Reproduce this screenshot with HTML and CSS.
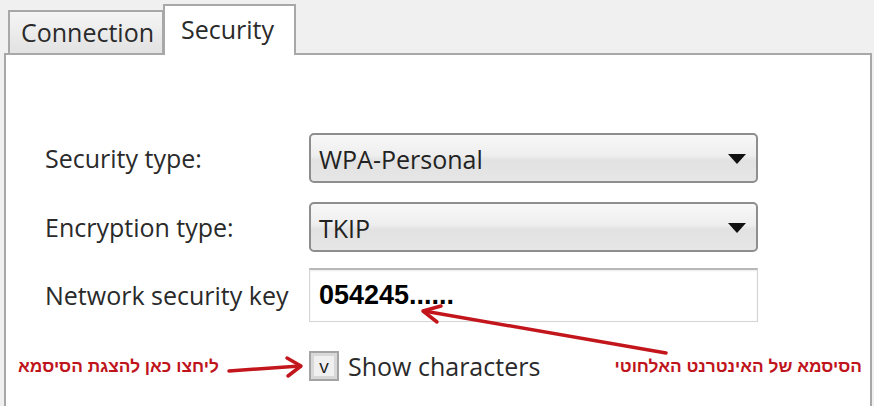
FILE: index.html
```html
<!DOCTYPE html>
<html lang="en">
<head>
    <meta charset="UTF-8">
    <meta name="viewport" content="width=device-width, initial-scale=1.0">
    <title>Wireless Network Properties</title>
    <link rel="stylesheet" href="styles.css">
</head>
<body>
   <div class="window">
      <div class="tabs">
         <div class="tab">Connection</div>
         <div class="tab active">Security</div>
      </div>
      <div class="panel">
         <div class="row">
            <label class="label">Security type:</label>
            <div class="select"><span>WPA-Personal</span><i class="caret"></i></div>
         </div>
         <div class="row row-enc">
            <label class="label">Encryption type:</label>
            <div class="select"><span>TKIP</span><i class="caret"></i></div>
         </div>
         <div class="row row-key">
            <label class="label">Network security key</label>
            <div class="key">054245......</div>
         </div>
         <div class="row row-check">
            <div class="note" dir="rtl">ליחצו כאן להצגת הסיסמא</div>
            <div class="check-cell">
               <span class="checkbox">v</span>
               <span class="check-label">Show characters</span>
               <span class="note note-right" dir="rtl">הסיסמא של האינטרנט האלחוטי</span>
            </div>
         </div>
      </div>
      <!-- annotation arrows, drawn over the dialog -->
      <svg class="arrows" width="874" height="406" viewBox="0 0 874 406">
         <g fill="none" stroke="#c3161c" stroke-width="3.5" stroke-linecap="round" stroke-linejoin="round">
            <path d="M229 371 L300 366"/>
            <path d="M287 358 L301 366 L288 376"/>
            <path d="M666 353 L424 311"/>
            <path d="M441 306 L423 311 L437 322"/>
         </g>
      </svg>
   </div>
</body>
</html>
```

FILE: styles.css
```css
html, body {
    margin: 0;
    padding: 0;
}

body {
    background-color: #f0f0f0;
    font-family: 'Open Sans', 'DejaVu Sans', sans-serif;
    color: #2a2a2a;
    overflow: hidden;
}

.window {
    position: relative;
    width: 874px;
    height: 406px;
}

/* tab strip */
.tabs {
    display: flex;
    align-items: flex-end;
    height: 53px;
    padding-left: 8px;
    box-sizing: border-box;
}

.tab {
    position: relative;
    z-index: 1;
    box-sizing: border-box;
    width: 156px;
    height: 43px;
    padding: 3px 0 0 11px;
    font-size: 25px;
    border: 2px solid #a8a8a8;
    border-bottom: none;
    background: linear-gradient(to bottom, #f5f5f5, #e2e2e2);
}

.tab.active {
    width: 133px;
    height: 51px;
    margin-left: -1px;
    margin-bottom: -2px;
    padding: 6px 0 0 16px;
    background: #fff;
}

/* page body */
.panel {
    box-sizing: border-box;
    height: 353px;
    margin: 0 2px 0 4px;
    padding: 78px 8px 0 12px;
    background: #fff;
    border: 2px solid #a8a8a8;
    border-bottom: none;
}

.row {
    display: grid;
    grid-template-columns: 291px 449px 1fr;
    align-items: center;
}

.row-enc { margin-top: 19px; }
.row-key { margin-top: 16px; }
.row-check { margin-top: 27px; }

.label {
    padding-left: 27px;
    font-size: 25px;
}

.select {
    display: flex;
    align-items: center;
    box-sizing: border-box;
    height: 50px;
    padding: 2px 10px 0 8px;
    font-size: 25px;
    color: #222;
    border: 2px solid #8e8e8e;
    border-radius: 5px;
    background: linear-gradient(to bottom, #f8f8f8 0%, #eeeeee 45%, #e2e2e2 55%, #e6e6e6 100%);
}

.caret {
    margin-left: auto;
    width: 0;
    height: 0;
    border-left: 9px solid transparent;
    border-right: 9px solid transparent;
    border-top: 10px solid #111;
}

.key {
    box-sizing: border-box;
    height: 54px;
    padding: 10px 0 0 9px;
    font-family: 'Liberation Sans', Arial, sans-serif;
    font-weight: bold;
    font-size: 27px;
    color: #000;
    border: 1px solid #d4d4d4;
    border-top: 2px solid #b8b8b8;
    box-shadow: inset 0 1px 2px rgba(0, 0, 0, 0.08);
}

.check-cell {
    grid-column: 2 / 4;
    display: flex;
    align-items: center;
}

.checkbox {
    box-sizing: border-box;
    width: 30px;
    height: 30px;
    display: flex;
    align-items: center;
    justify-content: center;
    font-size: 19px;
    color: #222;
    border: 2px solid #a4a4a4;
    background: #f0f0f0;
    box-shadow: inset 0 0 0 3px #d8d8d8;
}

.check-label {
    margin-left: 9px;
    font-size: 25px;
}

.note {
    font-family: 'Liberation Sans', Arial, sans-serif;
    font-weight: bold;
    font-size: 17.3px;
    color: #c0141c;
    justify-self: start;
}

.note-right {
    margin-left: auto;
}

.arrows {
    position: absolute;
    left: 0;
    top: 0;
    pointer-events: none;
}
```
